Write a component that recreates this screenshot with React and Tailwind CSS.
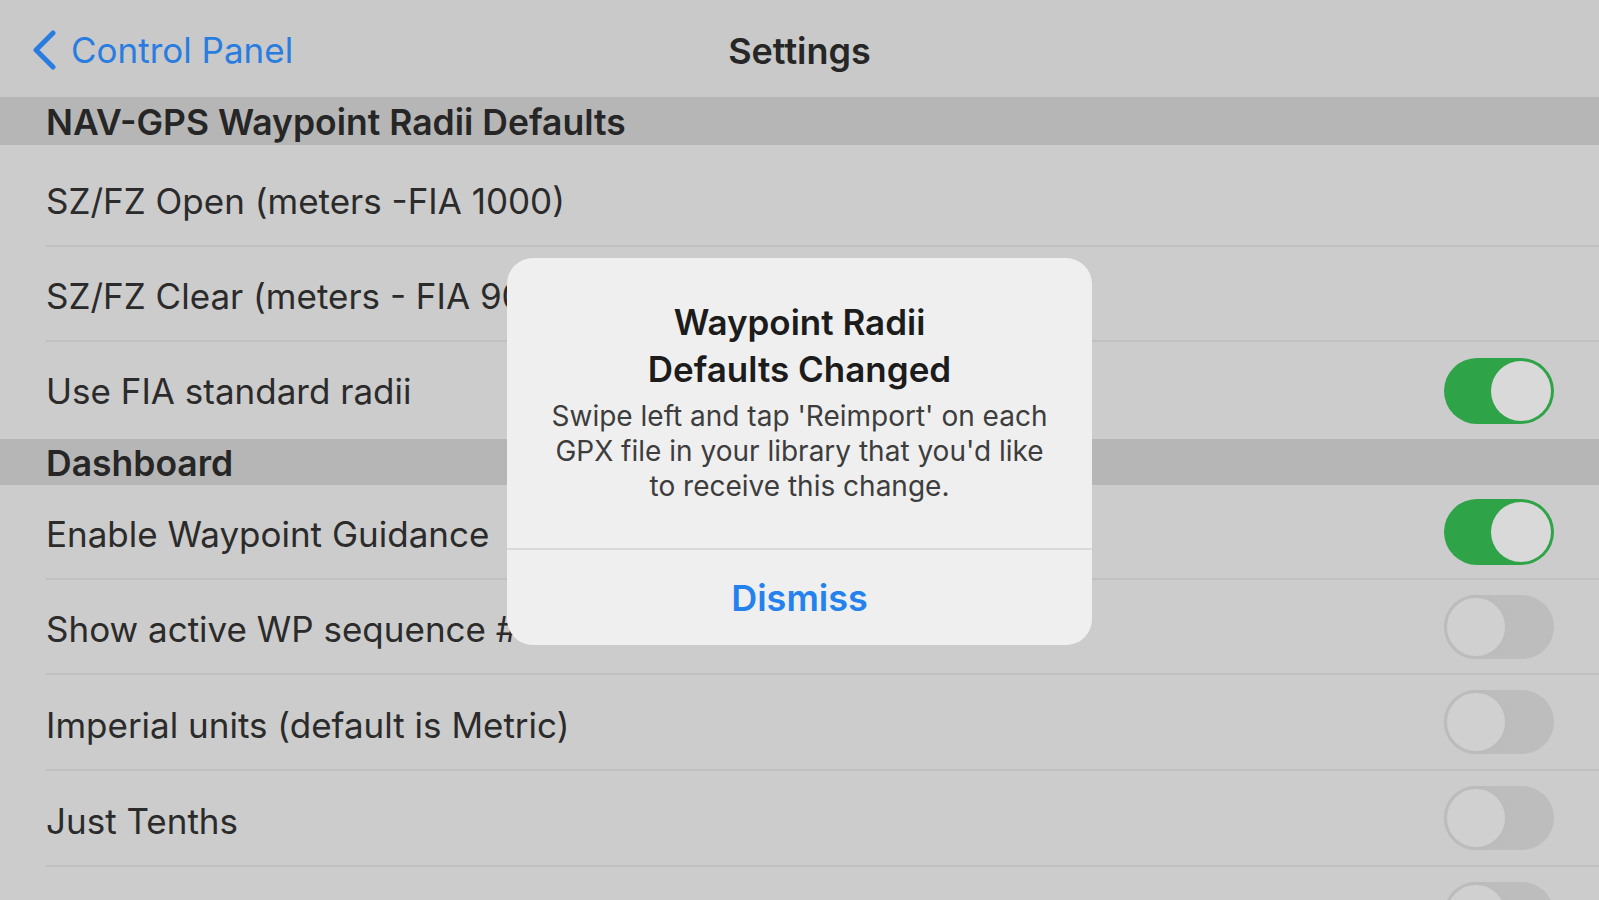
import React from "react";

const font = { fontFamily: "Inter, 'Liberation Sans', sans-serif" };

const Toggle = ({ on }) => {
  if (on) {
    return (
      <div className="w-[110px] h-[66px] rounded-full bg-[#2ea347] flex items-center justify-end px-[3px] shrink-0">
        <div className="w-[60px] h-[60px] rounded-full bg-[#d9d9d9]" />
      </div>
    );
  }
  return (
    <div className="w-[110px] h-[64px] rounded-full bg-[#bdbdbd] flex items-center justify-start shrink-0">
      <div className="w-[64px] h-[64px] rounded-full bg-[#d0d0d0] border-[3px] border-[#bcbcbc]" />
    </div>
  );
};

const SectionHeader = ({ title, h = "h-[48px]" }) => (
  <div className={`${h} bg-[#b6b6b6] flex items-center pl-[46px]`}>
    <span className="pt-[4px] text-[35.5px] font-semibold text-[#262626]">{title}</span>
  </div>
);

const Row = ({ label, toggle, h = "h-[95px]", pad = "pt-[6px]", last }) => (
  <div className={`${h} bg-[#cccccc] pl-[46px] flex flex-col`}>
    <div className="flex-1 flex items-center justify-between pr-[45px]">
      <span className={`${pad} text-[35px] text-[#2b2b2b]`}>{label}</span>
      {toggle !== undefined && <Toggle on={toggle} />}
    </div>
    {!last && <div className="h-[2px] bg-[#c0c0c0]" />}
  </div>
);

export default function App() {
  return (
    <div className="relative w-full h-[900px] overflow-hidden bg-[#cccccc]" style={font}>
      {/* nav */}
      <div className="h-[97px] bg-[#c9c9c9] flex items-center relative">
        <div className="flex items-center pl-[31px] gap-[14px] pt-[3px] text-[#2a7de0]">
          <svg width="26" height="40" viewBox="0 0 26 40" fill="none">
            <path d="M22 3 L5 20 L22 37" stroke="#2a7de0" strokeWidth="5" strokeLinecap="round" strokeLinejoin="round" />
          </svg>
          <span className="text-[35px]">Control Panel</span>
        </div>
        <div className="absolute left-0 right-0 top-0 h-full flex items-center justify-center pt-[4px] pointer-events-none">
          <span className="text-[36px] font-semibold text-[#262626]">Settings</span>
        </div>
      </div>

      <SectionHeader title="NAV-GPS Waypoint Radii Defaults" />
      <Row label="SZ/FZ Open (meters -FIA 1000)" h="h-[102px]" pad="pt-[12px]" />
      <Row label="SZ/FZ Clear (meters - FIA 900)" />
      <Row label="Use FIA standard radii" toggle={true} h="h-[97px]" pad="pt-[2px]" last />
      <SectionHeader title="Dashboard" h="h-[46px]" />
      <Row label="Enable Waypoint Guidance" toggle={true} />
      <Row label="Show active WP sequence #" toggle={false} />
      <Row label="Imperial units (default is Metric)" toggle={false} h="h-[96px]" />
      <Row label="Just Tenths" toggle={false} h="h-[96px]" />
      <Row label="" toggle={false} />

      {/* alert */}
      <div className="absolute inset-0 flex items-start justify-center pt-[258px]">
        <div className="w-[585px] rounded-[26px] bg-[#efefef] flex flex-col items-center">
          <div className="pt-[41px] pb-[44px] px-[30px] flex flex-col items-center text-center">
            <div className="text-[35px] leading-[47px] font-semibold text-[#1c1c1c]">
              Waypoint Radii
              <br />
              Defaults Changed
            </div>
            <div className="mt-[6px] text-[28px] leading-[35px] text-[#3d3d3d] whitespace-nowrap">
              Swipe left and tap 'Reimport' on each
              <br />
              GPX file in your library that you'd like
              <br />
              to receive this change.
            </div>
          </div>
          <div className="w-full h-[2px] bg-[#dadada]" />
          <div className="w-full h-[95px] flex items-center justify-center">
            <span className="text-[36px] font-semibold text-[#2482ee]">Dismiss</span>
          </div>
        </div>
      </div>
    </div>
  );
}
